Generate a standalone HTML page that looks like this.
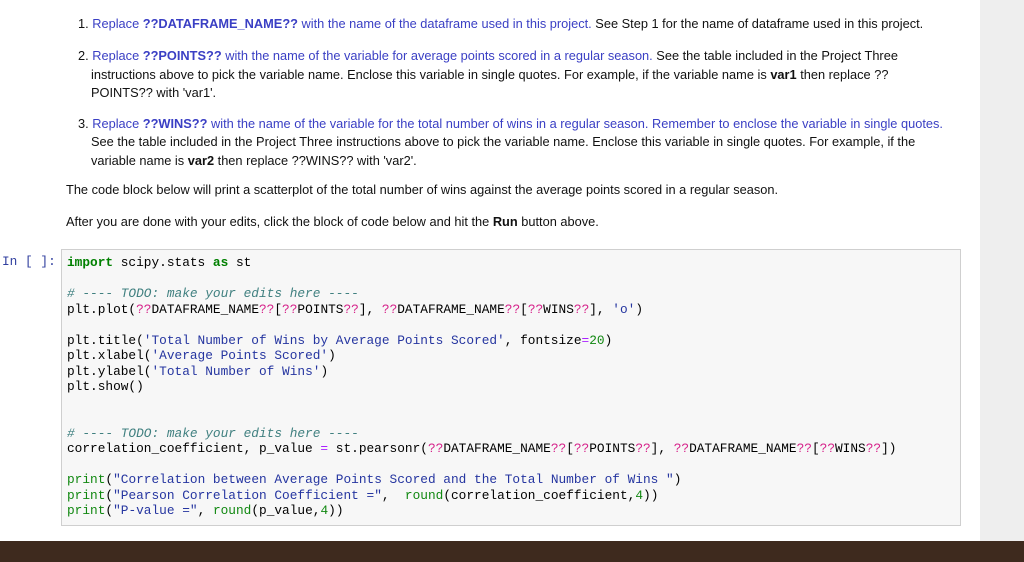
<!DOCTYPE html>
<html><head><meta charset="utf-8"><style>
body{margin:0;width:1024px;height:562px;background:#fff;position:relative;overflow:hidden;font-family:"Liberation Sans",Arial,sans-serif;font-size:12.8px;color:#111}
.strip{position:absolute;left:980px;top:0;width:44px;height:541px;background:#eeeeee}
.bar{position:absolute;left:0;top:541px;width:1024px;height:21px;background:#3e2a1e}
.t{position:absolute;white-space:nowrap;line-height:18px}
.b{color:#3a3fc4}
.k{color:#008000;font-weight:bold}
.code{position:absolute;left:61px;top:249px;width:898px;height:275px;background:#f7f7f7;border:1px solid #cfcfcf}
.c{position:absolute;left:67px;font-family:"Liberation Mono",monospace;font-size:12.8px;white-space:pre;line-height:15.5px;color:#000}
.m{color:#d6228a}.s{color:#2535a0}.cm{color:#408080;font-style:italic}.n{color:#118811}.o{color:#aa22ff}
.pr{position:absolute;left:2px;top:254px;font-family:"Liberation Mono",monospace;font-size:12.8px;color:#303f9f}
</style></head><body>
<div class="strip"></div>
<div class="t" style="left:78px;top:15px">1. <span class="b">Replace <b>??DATAFRAME_NAME??</b> with the name of the dataframe used in this project.</span> See Step 1 for the name of dataframe used in this project.</div>
<div class="t" style="left:78px;top:47px">2. <span class="b">Replace <b>??POINTS??</b> with the name of the variable for average points scored in a regular season.</span> See the table included in the Project Three</div>
<div class="t" style="left:91px;top:66px">instructions above to pick the variable name. Enclose this variable in single quotes. For example, if the variable name is <b>var1</b> then replace ??</div>
<div class="t" style="left:91px;top:84px">POINTS?? with 'var1'.</div>
<div class="t" style="left:78px;top:115px">3. <span class="b">Replace <b>??WINS??</b> with the name of the variable for the total number of wins in a regular season. Remember to enclose the variable in single quotes.</span></div>
<div class="t" style="left:91px;top:133px">See the table included in the Project Three instructions above to pick the variable name. Enclose this variable in single quotes. For example, if the</div>
<div class="t" style="left:91px;top:152px">variable name is <b>var2</b> then replace ??WINS?? with 'var2'.</div>
<div class="t" style="left:66px;top:181px">The code block below will print a scatterplot of the total number of wins against the average points scored in a regular season.</div>
<div class="t" style="left:66px;top:213px">After you are done with your edits, click the block of code below and hit the <b>Run</b> button above.</div>
<div class="pr">In [ ]:</div>
<div class="code"></div>
<div class="c" style="top:255px"><span class="k">import</span> scipy.stats <span class="k">as</span> st

<span class="cm"># ---- TODO: make your edits here ----</span>
plt.plot(<span class="m">??</span>DATAFRAME_NAME<span class="m">??</span>[<span class="m">??</span>POINTS<span class="m">??</span>], <span class="m">??</span>DATAFRAME_NAME<span class="m">??</span>[<span class="m">??</span>WINS<span class="m">??</span>], <span class="s">'o'</span>)

plt.title(<span class="s">'Total Number of Wins by Average Points Scored'</span>, fontsize<span class="o">=</span><span class="n">20</span>)
plt.xlabel(<span class="s">'Average Points Scored'</span>)
plt.ylabel(<span class="s">'Total Number of Wins'</span>)
plt.show()


<span class="cm"># ---- TODO: make your edits here ----</span>
correlation_coefficient, p_value <span class="o">=</span> st.pearsonr(<span class="m">??</span>DATAFRAME_NAME<span class="m">??</span>[<span class="m">??</span>POINTS<span class="m">??</span>], <span class="m">??</span>DATAFRAME_NAME<span class="m">??</span>[<span class="m">??</span>WINS<span class="m">??</span>])

<span class="n">print</span>(<span class="s">"Correlation between Average Points Scored and the Total Number of Wins "</span>)
<span class="n">print</span>(<span class="s">"Pearson Correlation Coefficient ="</span>,  <span class="n">round</span>(correlation_coefficient,<span class="n">4</span>))
<span class="n">print</span>(<span class="s">"P-value ="</span>, <span class="n">round</span>(p_value,<span class="n">4</span>))</div>
<div class="bar"></div>
</body></html>
